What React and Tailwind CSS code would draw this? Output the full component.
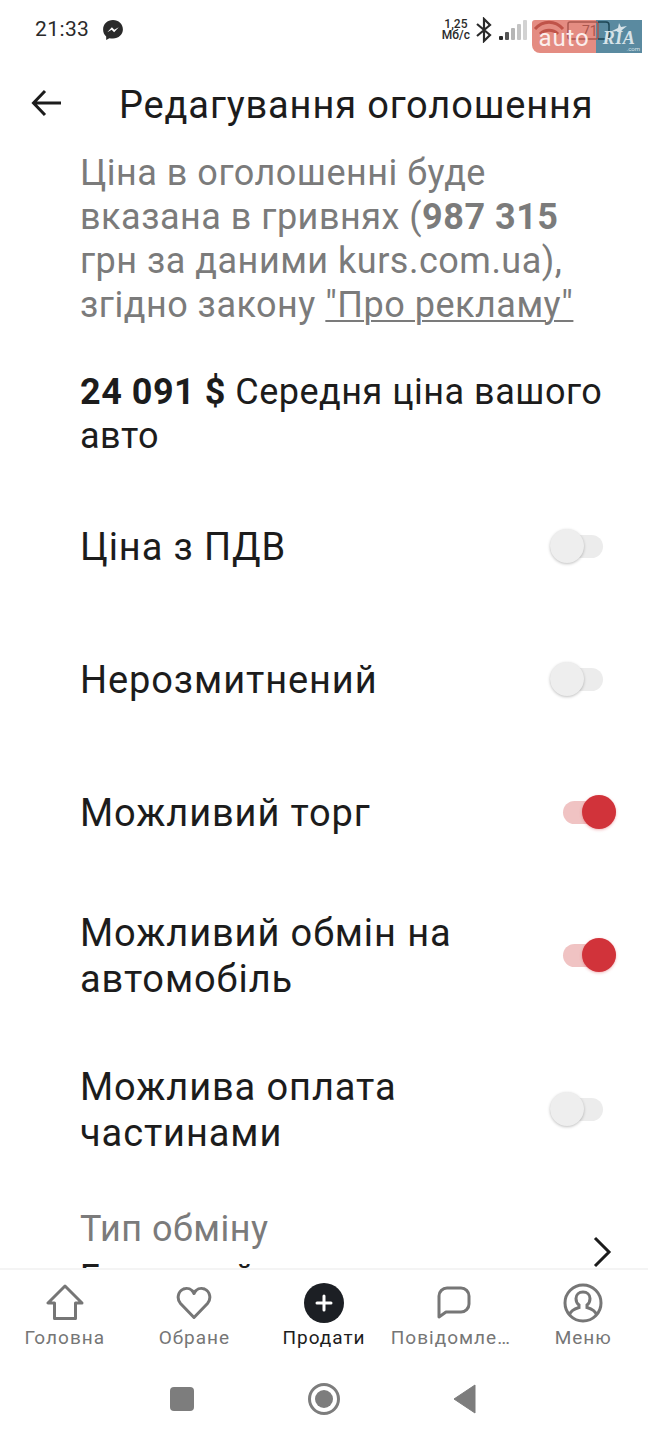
import React from 'react';

function Toggle({ on }) {
  return (
    <div className={`flex w-[66px] shrink-0 ${on ? 'justify-end' : 'justify-start'}`}>
      <div className={`relative w-[53px] h-[23px] rounded-full ${on ? 'bg-[#f0c3c3]' : 'bg-[#ececec]'}`}>
        <div
          className={`absolute top-[-6px] w-[34px] h-[34px] rounded-full ${
            on
              ? 'right-0 bg-[#d1333a] shadow-[0_1px_3px_rgba(211,47,54,0.35)]'
              : 'left-0 bg-[#eeeeee] shadow-[0_1px_3px_rgba(0,0,0,0.25)]'
          }`}
        />
      </div>
    </div>
  );
}

function OptionRow({ label, on, className }) {
  return (
    <div className={`flex items-center justify-between pl-[80px] pr-[32px] ${className}`}>
      <p className="w-[420px] text-[38px] leading-[46px] tracking-[0.9px] text-[#1c1c1c]">{label}</p>
      <Toggle on={on} />
    </div>
  );
}

function StatusBar() {
  return (
    <div className="relative h-[60px] shrink-0 flex items-center pl-[35px]">
      <span className="text-[21px] tracking-[0.4px] text-[#2a2a2a]">21:33</span>
      <svg className="ml-[13px] w-[22px] h-[22px]" viewBox="0 0 20 20">
        <path d="M10 1C4.900 1 1 4.700 1 9.600c0 2.600 1 4.800 2.800 6.300V19l2.900-1.600c1 .3 2.100.4 3.300.4 5.100 0 9-3.700 9-8.200C19 4.700 15.100 1 10 1z" fill="#2a2a2a" />
        <path d="M4.800 12 9 7.600l2.200 2.200 4-2.200-4.200 4.500-2.200-2.300z" fill="#fff" />
      </svg>
      <div className="ml-auto mr-[6px] flex items-center">
        <div className="flex flex-col items-center text-[12px] leading-[11px] font-medium text-[#2a2a2a]">
          <span>1,25</span>
          <span>Мб/с</span>
        </div>
        <svg className="ml-[5px] w-[18px] h-[26px]" viewBox="0 0 18 26" fill="none" stroke="#2a2a2a" strokeWidth="2.2">
          <path d="M2 7l13 11-6 6V2l6 6L2 19" />
        </svg>
        <div className="ml-[6px] mr-[5px] flex items-end gap-[2px] h-[20px] w-[28px]">
          <div className="w-[4px] h-[4px] bg-[#2a2a2a] rounded-[1px]" />
          <div className="w-[4px] h-[8px] bg-[#555] rounded-[1px]" />
          <div className="w-[4px] h-[12px] bg-[#b5b5b5] rounded-[1px]" />
          <div className="w-[4px] h-[16px] bg-[#c4c4c4] rounded-[1px]" />
          <div className="w-[4px] h-[20px] bg-[#d2d2d2] rounded-[1px]" />
        </div>
        {/* auto.ria watermark sits over the wifi and battery icons */}
        <div className="relative w-[110px] h-[33px] mt-[13px] flex overflow-hidden rounded-bl-[8px] rounded-tl-[3px]">
          <div className="w-[64px] bg-[#e48c82] flex justify-center">
            <span className="relative z-10 text-[24px] leading-[30px] tracking-[0.8px] text-[#fbeeec] mt-[3px]">auto</span>
          </div>
          <div className="relative w-[46px] bg-[#5a8aa0] flex justify-center">
            <span className="relative z-10 mt-[9px] text-[18px] leading-[18px] font-bold italic tracking-[0.5px] text-[#d7e3e8] font-['Liberation_Serif',serif]">RIA</span>
            <span className="absolute right-[2px] bottom-0 text-[6px] leading-[8px] text-[#d7e3e8]">.com</span>
          </div>
          <svg className="absolute left-0 top-0 w-[110px] h-[33px]" viewBox="0 0 110 33" fill="none">
            <path d="M3 9c8-9 20-9 28 0M8 14c5-5 13-5 18 0" stroke="#bf5349" strokeWidth="3" />
            <rect x="36" y="2" width="30" height="17" rx="2" stroke="#a9564e" strokeWidth="1.500" />
            <path d="M66 2h8a3 3 0 0 1 3 3v11a3 3 0 0 1-3 3h-8" stroke="#1d4554" strokeWidth="1.500" />
            <text x="50" y="16" fontSize="14" fill="#a9564e">71</text>
            <path d="M78 12l8-4 1-5 2 4 6-1-5 4-2 3-3-2z" fill="#d7e3e8" />
          </svg>
        </div>
      </div>
    </div>
  );
}

function NavItem({ label, active, children }) {
  return (
    <div className="flex flex-col items-center min-w-0">
      <div className="h-[42px] flex items-center justify-center">{children}</div>
      <span className={`mt-[2px] w-full text-center text-[19px] leading-[24px] tracking-[1px] truncate px-[2px] ${active ? 'text-[#1c1c1c]' : 'text-[#767676]'}`}>
        {label}
      </span>
    </div>
  );
}

function BottomNav() {
  return (
    <div className="shrink-0 h-[172px] bg-white border-t-2 border-[#f4f4f4]">
      <div className="grid grid-cols-5 pt-[12px]">
        <NavItem label="Головна">
          <svg className="w-[38px] h-[38px]" viewBox="0 0 38 38" fill="none" stroke="#767676" strokeWidth="3" strokeLinejoin="round">
            <path d="M19 2 2 19h6.500v15.500h21V19H36z" />
          </svg>
        </NavItem>
        <NavItem label="Обране">
          <svg className="w-[36px] h-[34px]" viewBox="0 0 36 34" fill="none" stroke="#767676" strokeWidth="3" strokeLinejoin="round">
            <path d="M18 31.500 4.500 17.500C.5 13 1.800 5.500 7.500 3 11.500 1.400 15.800 3 18 7.500 20.200 3 24.500 1.400 28.500 3c5.700 2.500 7 10 3 14.500z" />
          </svg>
        </NavItem>
        <NavItem label="Продати" active>
          <div className="w-[40px] h-[40px] rounded-full bg-[#1c1f24] flex items-center justify-center">
            <svg className="w-[18px] h-[18px]" viewBox="0 0 18 18" stroke="#fff" strokeWidth="3" strokeLinecap="round">
              <path d="M9 2v14M2 9h14" />
            </svg>
          </div>
        </NavItem>
        <NavItem label="Повідомлення">
          <svg className="w-[34px] h-[34px]" viewBox="0 0 34 34" fill="none" stroke="#767676" strokeWidth="3" strokeLinejoin="round">
            <path d="M2 31V10a8 8 0 0 1 8-8h14a8 8 0 0 1 8 8v8a8 8 0 0 1-8 8H9z" />
          </svg>
        </NavItem>
        <NavItem label="Меню">
          <svg className="w-[40px] h-[40px]" viewBox="0 0 40 40" fill="none" stroke="#767676" strokeWidth="3">
            <circle cx="20" cy="20" r="18" />
            <path d="M6.500 32c1-4 4-6 9.500-7.500v-2.500c-2-1.500-3-3.500-3-6.500 0-4 3-6.500 7-6.500s7 2.500 7 6.500c0 3-1 5-3 6.500v2.500c5.500 1.500 8.500 3.500 9.500 7.500" />
          </svg>
        </NavItem>
      </div>
      <div className="relative mt-[32px] h-[40px]">
        <div className="absolute left-[170px] top-[5px] w-[24px] h-[24px] rounded-[4px] bg-[#7d7d7d]" />
        <div className="absolute left-[308px] top-[1px] w-[32px] h-[32px] rounded-full border-[3px] border-[#7d7d7d] flex items-center justify-center">
          <div className="w-[18px] h-[18px] rounded-full bg-[#7d7d7d]" />
        </div>
        <svg className="absolute left-[452px] top-[2px] w-[24px] h-[30px]" viewBox="0 0 24 30">
          <path d="M23 1v28L2 15z" fill="#7d7d7d" stroke="#7d7d7d" strokeLinejoin="round" />
        </svg>
      </div>
    </div>
  );
}

export default function App() {
  return (
    <div className="h-[1440px] w-[648px] flex flex-col overflow-hidden bg-white font-['Roboto',sans-serif]">
      <StatusBar />

      <div className="h-[90px] shrink-0 flex items-center pl-[30px]">
        <svg className="w-[34px] h-[34px] -mt-[4px]" viewBox="0 0 34 34" fill="none" stroke="#1c1c1c" strokeWidth="3">
          <path d="M31 17H4M15 5 3.500 17 15 29" />
        </svg>
        <h1 className="ml-[55px] text-[38px] leading-[44px] tracking-[0.85px] text-[#1c1c1c] whitespace-nowrap">
          Редагування оголошення
        </h1>
      </div>

      <div className="flex-1 min-h-0 overflow-hidden">
        <div className="pl-[80px] pr-[40px] pt-px">
          <p className="text-[36px] leading-[44px] tracking-[0.5px] text-[#7b7b7b] w-[520px]">
            Ціна в оголошенні буде вказана в гривнях (<b className="font-bold">987 315</b> грн за даними kurs.com.ua), згідно закону{' '}
            <span className="underline underline-offset-[3px] decoration-2">"Про рекламу"</span>
          </p>
          <p className="mt-[43px] text-[36px] leading-[44px] tracking-[0.5px] text-[#1c1c1c] w-[530px]">
            <b className="font-bold">24 091 $</b> Середня ціна вашого авто
          </p>
        </div>

        <div className="mt-[22px]">
          <OptionRow label="Ціна з ПДВ" on={false} className="h-[133px]" />
          <OptionRow label="Нерозмитнений" on={false} className="h-[133px]" />
          <OptionRow label="Можливий торг" on className="h-[133px]" />
          <OptionRow label="Можливий обмін на автомобіль" on className="h-[153px]" />
          <OptionRow label="Можлива оплата частинами" on={false} className="h-[155px]" />
        </div>

        <div className="flex items-center justify-between pl-[80px] pr-[36px] mt-[20px]">
          <div>
            <p className="text-[36px] leading-[44px] tracking-[0.5px] text-[#7b7b7b]">Тип обміну</p>
            <p className="mt-[5px] text-[36px] leading-[44px] tracking-[0.5px] text-[#1c1c1c]">Будь-який</p>
          </div>
          <svg className="w-[20px] h-[32px] -mt-[3px]" viewBox="0 0 20 32" fill="none" stroke="#1c1c1c" strokeWidth="3">
            <path d="M3 2l14 14L3 30" />
          </svg>
        </div>
      </div>

      <BottomNav />
    </div>
  );
}
